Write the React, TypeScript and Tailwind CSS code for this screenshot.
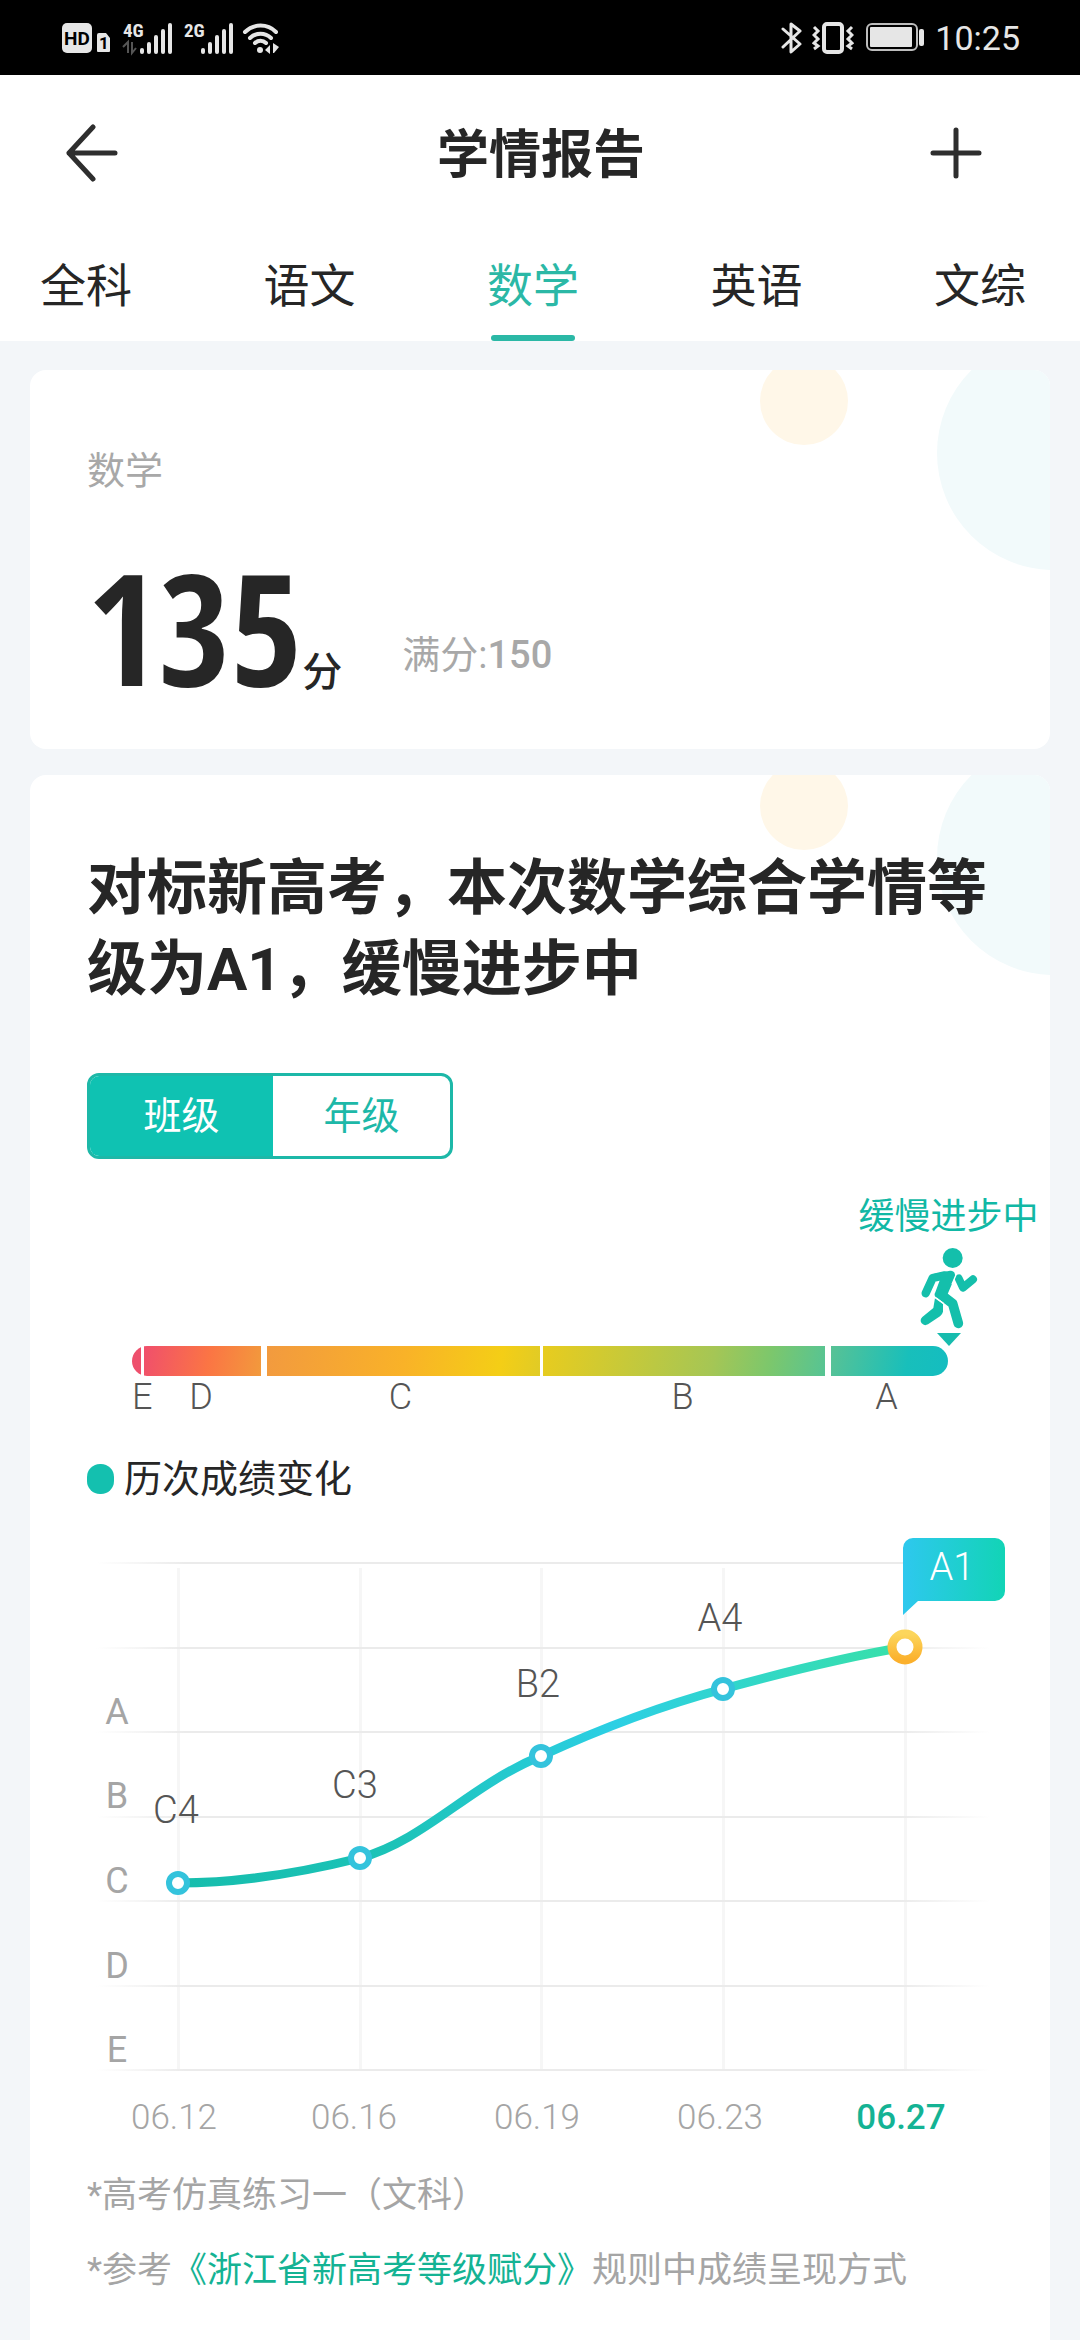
import React, { useState } from 'react';

const SUBJECTS = ['全科', '语文', '数学', '英语', '文综'];

const POINTS = [
  { x: 148, y: 353, label: 'C4', labelX: 146, labelY: 293, date: '06.12', dateX: 144 },
  { x: 330, y: 328, label: 'C3', labelX: 325, labelY: 268, date: '06.16', dateX: 324 },
  { x: 511, y: 226, label: 'B2', labelX: 508, labelY: 167, date: '06.19', dateX: 507 },
  { x: 693, y: 159, label: 'A4', labelX: 690, labelY: 101, date: '06.23', dateX: 690 },
];

const GRID_Y = [32, 117, 201, 286, 370, 455, 539];
const GRID_X = [148, 330, 511, 693, 875];

const LEVELS = [
  { name: 'A', y: 194 },
  { name: 'B', y: 278 },
  { name: 'C', y: 363 },
  { name: 'D', y: 448 },
  { name: 'E', y: 532 },
];

const SignalBars: React.FC = () => (
  <g fill="#e6e6e6">
    <rect x="17" y="26" width="4" height="6" rx="2" />
    <rect x="24" y="20" width="4" height="12" rx="2" />
    <rect x="31" y="13" width="4" height="19" rx="2" />
    <rect x="38" y="7" width="4" height="25" rx="2" />
    <rect x="45" y="1" width="4" height="31" rx="2" />
  </g>
);

const StatusBar: React.FC = () => (
  <div className="flex h-[75px] items-center justify-between bg-black pl-[62px] pr-[60px] text-[#e6e6e6]">
    <div className="flex items-center">
      <svg width="49" height="32" viewBox="0 0 49 32">
        <rect x="0" y="1" width="30" height="30" rx="5" fill="#e6e6e6" />
        <text x="15" y="23" textAnchor="middle" fontSize="19" fontWeight="700" fill="#000">
          HD
        </text>
        <path d="M37 11h7l4 5v13a1 1 0 0 1-1 1H36a1 1 0 0 1-1-1V13a2 2 0 0 1 2-2z" fill="#e6e6e6" />
        <text x="42" y="27" textAnchor="middle" fontSize="17" fontWeight="700" fill="#000">
          1
        </text>
      </svg>
      <svg className="ml-3 overflow-visible" width="50" height="32" viewBox="0 0 50 32">
        <text x="0" y="15" fontSize="19" fontWeight="700" fill="#e6e6e6" className="font-['Roboto_Condensed',Roboto,sans-serif]">
          4G
        </text>
        <path d="M0 25l5-5v11M13 26l-4 5V20" fill="none" stroke="#555" strokeWidth="2" />
        <SignalBars />
      </svg>
      <svg className="ml-[11px] overflow-visible" width="50" height="32" viewBox="0 0 50 32">
        <text x="0" y="15" fontSize="19" fontWeight="700" fill="#e6e6e6" className="font-['Roboto_Condensed',Roboto,sans-serif]">
          2G
        </text>
        <SignalBars />
      </svg>
      <svg className="ml-2" width="39" height="32" viewBox="0 0 39 32">
        <g fill="none" stroke="#e6e6e6" strokeWidth="4" strokeLinecap="round">
          <path d="M3 10a22 22 0 0 1 31 0" />
          <path d="M8 16a15 15 0 0 1 21 0" />
          <path d="M13 21a8 8 0 0 1 11 0" />
        </g>
        <circle cx="18" cy="28" r="3" fill="#e6e6e6" />
        <path d="M23 28l5-5v9zM31 21l6 4-5 6h-1z" fill="#e6e6e6" />
      </svg>
    </div>
    <div className="flex items-center">
      <svg width="22" height="34" viewBox="0 0 22 34">
        <path
          d="M2 8l17 15-9 8V3l9 7L2 26"
          fill="none"
          stroke="#e6e6e6"
          strokeWidth="3"
          strokeLinejoin="round"
          strokeLinecap="round"
        />
      </svg>
      <svg className="ml-[9px]" width="42" height="32" viewBox="0 0 42 32">
        <rect x="12" y="2" width="18" height="28" rx="3" fill="none" stroke="#e6e6e6" strokeWidth="4" />
        <path d="M2 5l4 4-4 4 4 4-4 4 4 3-4 3M40 5l-4 4 4 4-4 4 4 4-4 3 4 3" fill="none" stroke="#e6e6e6" strokeWidth="3" />
      </svg>
      <svg className="ml-3" width="59" height="29" viewBox="0 0 59 29">
        <rect x="1" y="1" width="50" height="26" rx="5" fill="none" stroke="#bdbdbd" strokeWidth="2" />
        <rect x="4" y="4" width="42" height="20" rx="1" fill="#e6e6e6" />
        <rect x="53" y="6" width="5" height="17" rx="2" fill="#e6e6e6" />
      </svg>
      <span className="ml-[10px] text-[34px] leading-10">10:25</span>
    </div>
  </div>
);

const CardBubbles: React.FC = () => (
  <svg className="pointer-events-none absolute right-0 top-0" width="300" height="210" viewBox="0 0 300 210">
    <circle cx="54" cy="31" r="44" fill="#fff7e8" />
    <circle cx="304" cy="83" r="117" fill="#f2fafb" />
  </svg>
);

const Walker: React.FC = () => (
  <svg width="60" height="84" viewBox="57 40 180 252" fill="#14bfab" stroke="#14bfab">
    <circle cx="158" cy="73" r="30" stroke="none" />
    <path d="M77 179l21-46 36-8" fill="none" strokeWidth="25" strokeLinecap="round" strokeLinejoin="round" />
    <path d="M100 121l50-10q17-1 15 18l-22 52 10 20-46-10q-6-8-1-15l16-44z" stroke="none" />
    <path d="M122 182l36 28 17 59" fill="none" strokeWidth="29" strokeLinecap="round" strokeLinejoin="round" />
    <path d="M105 193l24 17v24q-2 8-9 14l-36 24q-11 6-19-3-7-10 2-19l33-27z" stroke="none" />
    <path d="M176 134l13 28 30-25" fill="none" strokeWidth="24" strokeLinecap="round" strokeLinejoin="round" />
    <path d="M156 152l18-42M103 190l28 20" stroke="#fff" strokeWidth="4" />
  </svg>
);

const LevelBar: React.FC = () => {
  const columns =
    'grid grid-cols-[minmax(0,9fr)_minmax(0,120fr)_minmax(0,279fr)_minmax(0,285fr)_minmax(0,123fr)]';

  return (
    <div className="mx-[102px]">
      <div className={`${columns} h-[30px] overflow-hidden rounded-full`}>
        <div className="bg-[#ee4f6c]" />
        <div className="ml-[3px] bg-[linear-gradient(100deg,#f04f6c,#fb7544_55%,#f29a3c)]" />
        <div className="ml-[6px] bg-[linear-gradient(100deg,#f29a3f,#f9b228_50%,#f4ce16_85%,#e0cb26)]" />
        <div className="ml-[3px] bg-[linear-gradient(100deg,#e8cc1e,#a5c655_60%,#7cc76c_80%,#56c494)]" />
        <div className="ml-[6px] bg-[linear-gradient(100deg,#58c295,#18bfbb_65%,#14bdc0)]" />
      </div>
      <div className={`${columns} mt-px text-center text-[36px] font-light leading-10 text-[#555]`}>
        <span>E</span>
        <span>D</span>
        <span>C</span>
        <span>B</span>
        <span>A</span>
      </div>
    </div>
  );
};

const ScoreChart: React.FC = () => (
  <svg className="block w-full" viewBox="0 0 1020 620" role="img" aria-label="历次成绩变化">
    <defs>
      <linearGradient id="fade" gradientUnits="userSpaceOnUse" x1="66" y1="0" x2="960" y2="0">
        <stop offset="0" stopColor="#ebebeb" stopOpacity="0" />
        <stop offset="0.1" stopColor="#ebebeb" />
        <stop offset="0.9" stopColor="#ebebeb" />
        <stop offset="1" stopColor="#ebebeb" stopOpacity="0" />
      </linearGradient>
      <linearGradient id="curve" gradientUnits="userSpaceOnUse" x1="148" y1="0" x2="875" y2="0">
        <stop offset="0" stopColor="#16bdac" />
        <stop offset="0.3" stopColor="#1cc3b8" />
        <stop offset="0.6" stopColor="#2ccfe4" />
        <stop offset="1" stopColor="#38e0a8" />
      </linearGradient>
      <linearGradient id="tip" x1="0" y1="0" x2="1" y2="0">
        <stop offset="0" stopColor="#2ec8ee" />
        <stop offset="1" stopColor="#12d4b6" />
      </linearGradient>
      <linearGradient id="sun" x1="0" y1="0" x2="0" y2="1">
        <stop offset="0" stopColor="#fcd65c" />
        <stop offset="1" stopColor="#fbb02c" />
      </linearGradient>
    </defs>

    {GRID_X.map((x) => (
      <rect key={x} x={x - 1} y="38" width="3" height="502" fill="#f6f6f6" />
    ))}
    {GRID_Y.map((y) => (
      <rect key={y} x="66" y={y} width="894" height="2" fill="url(#fade)" />
    ))}

    <g fontSize="36" fill="#a5a5a5" textAnchor="middle">
      {LEVELS.map((level) => (
        <text key={level.name} x="87" y={level.y}>
          {level.name}
        </text>
      ))}
    </g>

    <path
      d="M148 353C210 353 270 343 330 328C395 310 440 255 511 226C570 199 630 176 693 159C755 142 815 127 875 117"
      fill="none"
      stroke="url(#curve)"
      strokeWidth="9"
    />

    {POINTS.map((p) => (
      <g key={p.date} textAnchor="middle" fontWeight="300">
        <circle cx={p.x} cy={p.y} r="9" fill="#fff" stroke="#34c3dc" strokeWidth="6" />
        <text x={p.labelX} y={p.labelY} fontSize="38" fill="#555">
          {p.label}
        </text>
        <text x={p.dateX} y="599" fontSize="35" fill="#a5a5a5">
          {p.date}
        </text>
      </g>
    ))}

    <circle cx="875" cy="117" r="13" fill="#fff" stroke="url(#sun)" strokeWidth="9" />
    <path
      d="M883 8H965a10 10 0 0 1 10 10V61a10 10 0 0 1-10 10H888L873 85V18a10 10 0 0 1 10-10z"
      fill="url(#tip)"
    />
    <text x="922" y="50" textAnchor="middle" fontSize="38" fontWeight="300" fill="#fff">
      A1
    </text>
    <text x="871" y="599" textAnchor="middle" fontSize="35" fontWeight="500" fill="#14b394">
      06.27
    </text>
  </svg>
);

const App: React.FC = () => {
  const [subject, setSubject] = useState('数学');
  const [scope, setScope] = useState('班级');

  return (
    <div className="min-h-screen bg-[#f3f6f9] font-[Roboto,'Noto_Sans_CJK_SC',sans-serif] text-[#262626]">
      <StatusBar />

      <header className="bg-white">
        <div className="flex h-[156px] items-center justify-between pl-[66px] pr-[98px]">
          <button type="button" aria-label="返回" className="w-[52px]">
            <svg width="52" height="58" viewBox="0 0 52 58" fill="none" stroke="#2e2e2e" strokeWidth="5" strokeLinecap="round" strokeLinejoin="round">
              <path d="M27 3L3 29l24 26M3 29h46" />
            </svg>
          </button>
          <h1 className="pl-[34px] pt-[6px] text-[52px] font-bold leading-none">学情报告</h1>
          <button type="button" aria-label="添加" className="w-[52px]">
            <svg width="52" height="52" viewBox="0 0 52 52" fill="none" stroke="#2e2e2e" strokeWidth="5" strokeLinecap="round">
              <path d="M26 3v46M3 26h46" />
            </svg>
          </button>
        </div>
        <nav className="flex justify-between pl-10 pr-[54px]">
          {SUBJECTS.map((name) => (
            <button
              key={name}
              type="button"
              onClick={() => setSubject(name)}
              className={`flex h-[110px] flex-col items-center justify-between pt-8 text-[46px] leading-[46px] ${
                subject === name ? 'text-[#2bb8a6]' : ''
              }`}
            >
              {name}
              <span className={`h-[6px] w-[84px] rounded-full ${subject === name ? 'bg-[#2bb8a6]' : ''}`} />
            </button>
          ))}
        </nav>
      </header>

      <main className="flex flex-col gap-[26px] px-[30px] pt-[29px]">
        <section className="relative overflow-hidden rounded-2xl bg-white pb-[43px] pl-[57px] pt-[76px]">
          <CardBubbles />
          <p className="text-[38px] leading-[50px] text-[#a8a8a8]">数学</p>
          <div className="mt-[50px] flex items-end">
            <span className="font-['Noto_Sans_ExtraCondensed','Open_Sans_Condensed','Roboto_Condensed',Roboto,sans-serif] text-[155px] font-bold leading-[160px]">
              135
            </span>
            <span className="mb-2 text-[40px] font-medium leading-[50px]">分</span>
            <span className="mb-[26px] ml-[60px] text-[38px] leading-[50px] text-[#a8a8a8]">
              满分:<span className="font-medium">150</span>
            </span>
          </div>
        </section>

        <section className="relative overflow-hidden rounded-t-2xl bg-white pb-8 pt-[73px]">
          <CardBubbles />
          <h2 className="relative pl-[57px] pr-[60px] text-[60px] font-bold leading-[81px]">
            对标新高考，本次数学综合学情等级为A1，缓慢进步中
          </h2>

          <div className="ml-[57px] mt-[63px] flex h-[86px] w-[366px] overflow-hidden rounded-xl border-3 border-[#1db8a8]">
            {['班级', '年级'].map((name) => (
              <button
                key={name}
                type="button"
                onClick={() => setScope(name)}
                className={`text-[38px] first:w-[183px] last:flex-1 ${
                  scope === name ? 'bg-[#0fc2b2] text-white' : 'text-[#1db8a8]'
                }`}
              >
                {name}
              </button>
            ))}
          </div>

          <div className="mt-[38px] flex justify-end">
            <div className="flex w-[203px] flex-col items-center">
              <span className="text-[36px] leading-10 text-[#11b8a5]">缓慢进步中</span>
              <div className="mt-[10px]">
                <Walker />
              </div>
              <svg className="mt-[2px]" width="24" height="13" viewBox="0 0 24 13">
                <path d="M0 0h24L12 13z" fill="#17bcae" />
              </svg>
            </div>
          </div>

          <LevelBar />

          <h3 className="ml-[57px] mt-[42px] flex items-center gap-[10px] text-[38px] leading-10">
            <span className="h-[30px] w-[27px] rounded-[13px] bg-[#14c0af]" />
            历次成绩变化
          </h3>

          <div className="mt-[31px]">
            <ScoreChart />
          </div>

          <div className="mt-2 pl-[57px] text-[35px] leading-[75px] text-[#a5a5a5]">
            <p>*高考仿真练习一（文科）</p>
            <p>
              *参考
              <a href="#rules" className="text-[#14b394]">
                《浙江省新高考等级赋分》
              </a>
              规则中成绩呈现方式
            </p>
          </div>
        </section>
      </main>
    </div>
  );
};

export default App;
